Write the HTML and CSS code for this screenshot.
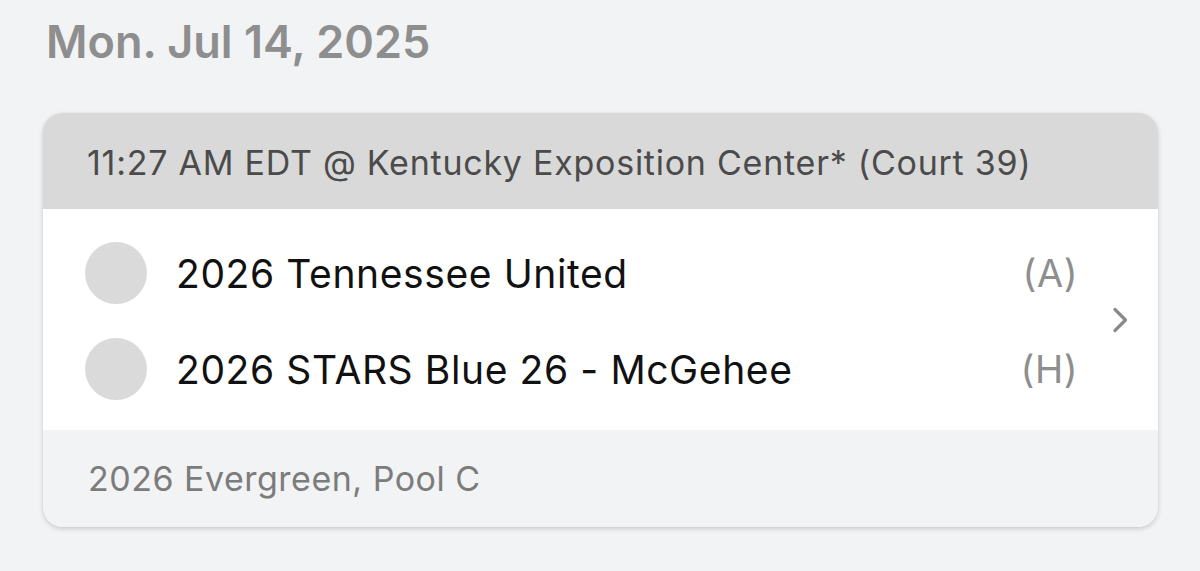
FILE: index.html
```html
<!DOCTYPE html>
<html>
<head>
<meta charset="utf-8">
<link rel="stylesheet" href="styles.css">
</head>
<body>
<div class="page">
  <div class="date">Mon. Jul 14, 2025</div>
  <div class="card">
    <div class="card-head">11:27 AM EDT @ Kentucky Exposition Center* (Court 39)</div>
    <div class="card-body">
      <div class="teams">
        <div class="team">
          <span class="logo"></span>
          <span class="name">2026 Tennessee United</span>
          <span class="side">(A)</span>
        </div>
        <div class="team">
          <span class="logo"></span>
          <span class="name">2026 STARS Blue 26 - McGehee</span>
          <span class="side">(H)</span>
        </div>
      </div>
      <div class="chev">
        <svg width="16" height="26" viewBox="0 0 16 26"><path d="M3 2.5 L13.5 13 L3 23.5" fill="none" stroke="#8a8a8a" stroke-width="3.2" stroke-linecap="round" stroke-linejoin="round"/></svg>
      </div>
    </div>
    <div class="card-foot">2026 Evergreen, Pool C</div>
  </div>
</div>
</body>
</html>
```
FILE: styles.css
```css
html, body { margin: 0; padding: 0; }
body {
  background: #f2f3f5;
  font-family: "Inter", "Noto Sans", sans-serif;
  width: 1200px;
  height: 571px;
  overflow: hidden;
}
.page { padding: 12px 42px 0 43px; }
.date {
  font-size: 45px;
  font-weight: 600;
  color: #8e8e8e;
  line-height: 60px;
  padding-left: 3px;
}
.card {
  margin-top: 41px;
  width: 1115px;
  border-radius: 20px;
  overflow: hidden;
  box-shadow: 0 2px 5px rgba(0,0,0,0.16), 0 0 1px rgba(0,0,0,0.12);
}
.card-head {
  height: 96px;
  background: #d9d9d9;
  color: #4b4b4b;
  font-size: 34px;
  letter-spacing: 0.75px;
  display: flex;
  align-items: center;
  padding-left: 44px;
  padding-top: 2px;
  box-sizing: border-box;
}
.card-body {
  background: #ffffff;
  height: 221px;
  display: flex;
  align-items: center;
}
.teams {
  flex: 1;
  padding: 16px 0 13px 42px;
  box-sizing: border-box;
}
.team {
  height: 96px;
  display: flex;
  align-items: center;
}
.logo {
  width: 62px;
  height: 62px;
  border-radius: 50%;
  background: #dadada;
  flex: none;
}
.name {
  margin-left: 29px;
  flex: 1;
  font-size: 39px;
  letter-spacing: 0.6px;
  color: #111111;
}
.side {
  font-size: 38px;
  letter-spacing: 0.5px;
  color: #8e8e8e;
  margin-right: 0;
}
.chev {
  width: 80px;
  display: flex;
  justify-content: center;
  padding-left: 4px;
  box-sizing: border-box;
}
.chev svg { display: block; }
.card-foot {
  height: 97px;
  background: #f2f3f5;
  color: #7c7c7c;
  font-size: 34px;
  letter-spacing: 0.5px;
  display: flex;
  align-items: center;
  padding-left: 45px;
  box-sizing: border-box;
}
```
